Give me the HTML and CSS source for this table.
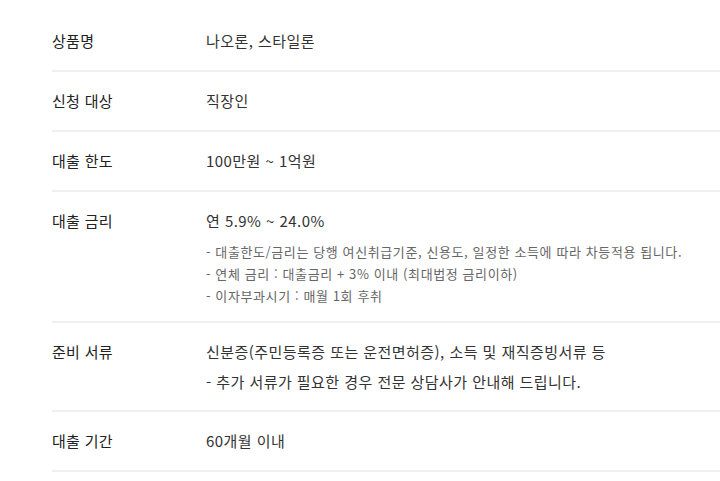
FILE: index.html
```html
<!DOCTYPE html>
<html lang="ko">
<head>
<meta charset="utf-8">
<link rel="stylesheet" href="styles.css">
</head>
<body>
<dl class="info">
  <div class="row">
    <dt class="label">상품명</dt>
    <dd class="value"><p class="main">나오론, 스타일론</p></dd>
  </div>
  <div class="row">
    <dt class="label">신청 대상</dt>
    <dd class="value"><p class="main">직장인</p></dd>
  </div>
  <div class="row">
    <dt class="label">대출 한도</dt>
    <dd class="value"><p class="main">100만원 ~ 1억원</p></dd>
  </div>
  <div class="row row-rate">
    <dt class="label">대출 금리</dt>
    <dd class="value">
      <p class="main">연 5.9% ~ 24.0%</p>
      <ul class="notes">
        <li>- 대출한도/금리는 당행 여신취급기준, 신용도, 일정한 소득에 따라 차등적용 됩니다.</li>
        <li>- 연체 금리 : 대출금리 + 3% 이내 (최대법정 금리이하)</li>
        <li>- 이자부과시기 : 매월 1회 후취</li>
      </ul>
    </dd>
  </div>
  <div class="row row-docs">
    <dt class="label">준비 서류</dt>
    <dd class="value">
      <p class="main">신분증(주민등록증 또는 운전면허증), 소득 및 재직증빙서류 등</p>
      <p class="main extra">- 추가 서류가 필요한 경우 전문 상담사가 안내해 드립니다.</p>
    </dd>
  </div>
  <div class="row">
    <dt class="label">대출 기간</dt>
    <dd class="value"><p class="main">60개월 이내</p></dd>
  </div>
</dl>
</body>
</html>
```
FILE: styles.css
```css
* { box-sizing: border-box; }
html, body { margin: 0; padding: 0; background: #fff; }
body {
  font-family: "Noto Sans CJK KR", "Noto Sans", sans-serif;
  color: #222;
}
.info {
  margin: 0 0 0 52px;
  padding-top: 12px;
}
.row {
  display: grid;
  grid-template-columns: 154px 1fr;
  padding: 18px 0;
  border-bottom: 2px solid #efefef;
}
.label {
  margin: 0;
  font-size: 15px;
  line-height: 22px;
  letter-spacing: 0.3px;
  color: #222;
}
.value { margin: 0; }
.main {
  margin: 0;
  font-size: 15px;
  line-height: 22px;
  letter-spacing: 0.45px;
  color: #333;
}
.notes {
  list-style: none;
  margin: 9px 0 0;
  padding: 0;
}
.notes li {
  font-size: 13px;
  line-height: 22px;
  letter-spacing: 0.6px;
  color: #666;
}
.row-rate { padding-bottom: 14px; }
.row-docs { padding-bottom: 17px; }
.extra { margin-top: 8px; }
```
